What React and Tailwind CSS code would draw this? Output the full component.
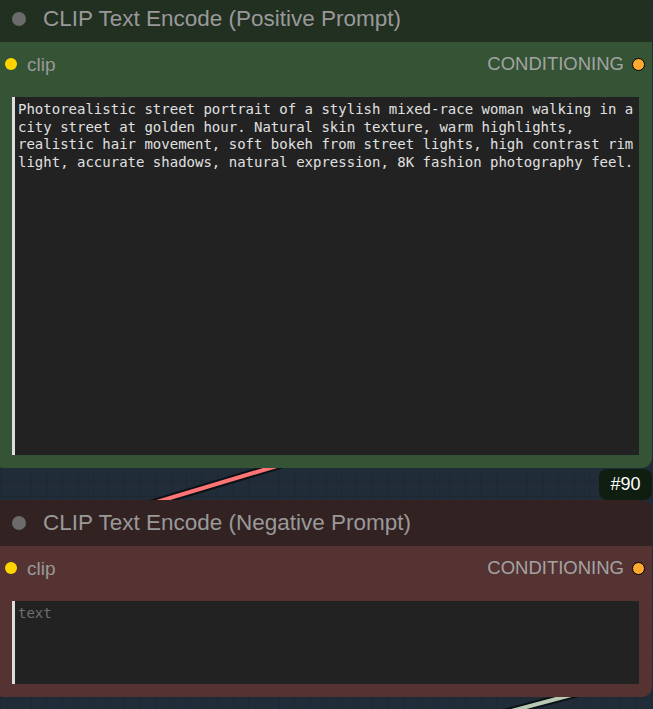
import React from 'react';

const positiveText =
  'Photorealistic street portrait of a stylish mixed-race woman walking in a city street at golden hour. Natural skin texture, warm highlights, realistic hair movement, soft bokeh from street lights, high contrast rim light, accurate shadows, natural expression, 8K fashion photography feel.';

const Node = ({ title, headerBg, bodyBg, text, placeholder, boxHeight }) => (
  <div className="relative z-10 -ml-[6px] w-[658px] rounded-[10px] overflow-hidden">
    <div className={`h-[46px] flex items-center pl-[18px] ${headerBg}`}>
      <span className="w-[14px] h-[14px] rounded-full bg-[#6b6b6b]" />
      <span className="ml-[17px] text-[22.5px] leading-none text-[#999]">{title}</span>
    </div>
    <div className={`${bodyBg} pb-[13px]`}>
      <div className="h-[42px] pt-[2px] flex items-center justify-between pl-[11px] pr-[7px]">
        <div className="flex items-center">
          <span className="w-[12px] h-[12px] rounded-full bg-[#ffd500]" />
          <span className="ml-[10px] text-[19px] leading-none text-[#999]">clip</span>
        </div>
        <div className="flex items-center">
          <span className="text-[18.5px] leading-none text-[#a3a3a3]">CONDITIONING</span>
          <span className="ml-[8px] w-[13px] h-[13px] rounded-full bg-[#ffa931] border border-black" />
        </div>
      </div>
      <div className="mt-[13px] ml-[18px] mr-[13px]">
        <textarea
          readOnly
          defaultValue={text}
          placeholder={placeholder}
          className={`block w-full ${boxHeight} resize-none overflow-hidden bg-[#222] border-l-[3px] border-[#ddd] px-[3px] pt-[4px] font-['DejaVu_Sans_Mono',monospace] text-[14px] leading-[17.5px] text-[#e0e0e0] placeholder:text-[#6e6e6e] outline-none`}
        />
      </div>
    </div>
  </div>
);

export default function App() {
  return (
    <div className="relative w-[653px] h-[709px] overflow-hidden bg-[#202c37] bg-[linear-gradient(to_right,#1d2833_1px,transparent_1px),linear-gradient(to_bottom,#1d2833_1px,transparent_1px)] bg-[size:15.5px_15.5px] font-['Liberation_Sans',Arial,sans-serif]">
      <svg className="absolute inset-0 z-0" width="653" height="709">
        <line x1="120" y1="513" x2="300" y2="459" stroke="#0c1116" strokeWidth="8" strokeLinecap="round" />
        <line x1="120" y1="513" x2="300" y2="459" stroke="#ff7474" strokeWidth="4" strokeLinecap="round" />
        <line x1="470" y1="722" x2="590" y2="690" stroke="#0c1116" strokeWidth="8" strokeLinecap="round" />
        <line x1="470" y1="722" x2="590" y2="690" stroke="#b7c8b3" strokeWidth="4" strokeLinecap="round" />
      </svg>
      <div className="relative flex flex-col -mt-[4px]">
        <Node
          title="CLIP Text Encode (Positive Prompt)"
          headerBg="bg-[#223022]"
          bodyBg="bg-[#355335]"
          text={positiveText}
          placeholder="text"
          boxHeight="h-[358px]"
        />
        <div className="relative z-10 h-[32px] flex justify-end pt-px pr-px">
          <div className="h-[31px] w-[53px] rounded-[8px] bg-[#0f1e10] flex items-center justify-center text-[18px] text-white">
            #90
          </div>
        </div>
        <Node
          title="CLIP Text Encode (Negative Prompt)"
          headerBg="bg-[#332222]"
          bodyBg="bg-[#553333]"
          text=""
          placeholder="text"
          boxHeight="h-[83px]"
        />
      </div>
    </div>
  );
}
